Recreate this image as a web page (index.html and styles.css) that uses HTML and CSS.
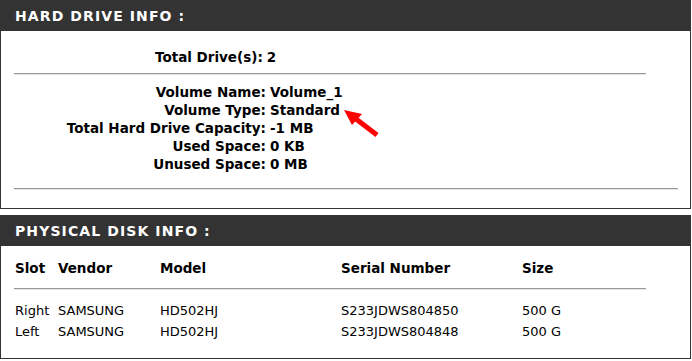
FILE: index.html
```html
<!DOCTYPE html>
<html lang="en">
<head>
    <meta charset="UTF-8">
    <title>Hard Drive Info</title>
    <link rel="stylesheet" href="styles.css">
</head>
<body>
    <!-- Hard drive info -->
    <div class="box box-hd">
        <div class="box-title">HARD DRIVE INFO :</div>
        <div class="box-body">
            <div class="info-row single">
                <span class="label">Total Drive(s):</span>
                <span class="value">2</span>
            </div>
            <div class="sep short"></div>
            <div class="info-list">
                <span class="label">Volume Name:</span><span class="value">Volume_1</span>
                <span class="label">Volume Type:</span><span class="value">Standard</span>
                <span class="label">Total Hard Drive Capacity:</span><span class="value">-1 MB</span>
                <span class="label">Used Space:</span><span class="value">0 KB</span>
                <span class="label">Unused Space:</span><span class="value">0 MB</span>
            </div>
            <div class="sep long"></div>
        </div>
        <svg class="arrow" width="40" height="30" viewBox="0 0 40 30">
            <path d="M35 26 L14 10" stroke="#ff0000" stroke-width="5" stroke-linecap="butt"/>
            <polygon points="2,1 20,5 10,16" fill="#ff0000"/>
        </svg>
    </div>

    <!-- Physical disk info -->
    <div class="box box-disk">
        <div class="box-title">PHYSICAL DISK INFO :</div>
        <div class="box-body">
            <div class="disk-row head">
                <span>Slot</span><span>Vendor</span><span>Model</span><span>Serial Number</span><span>Size</span>
            </div>
            <div class="sep short"></div>
            <div class="disk-row first">
                <span>Right</span><span>SAMSUNG</span><span>HD502HJ</span><span>S233JDWS804850</span><span>500 G</span>
            </div>
            <div class="disk-row">
                <span>Left</span><span>SAMSUNG</span><span>HD502HJ</span><span>S233JDWS804848</span><span>500 G</span>
            </div>
        </div>
    </div>
</body>
</html>
```

FILE: styles.css
```css
/* General */
body {
    margin: 0;
    padding: 0;
    background: #fff;
    font-family: "DejaVu Sans", sans-serif;
    font-size: 13px;
    color: #000;
}

/* Boxes */
.box {
    width: 689px;
    border: 1px solid #333;
    position: relative;
}

.box-hd {
    height: 207px;
}

.box-disk {
    margin-top: 6px;
    height: 142px;
}

.box-title {
    background: #333;
    color: #fff;
    font-weight: bold;
    font-size: 14px;
    letter-spacing: 1.1px;
    height: 30px;
    line-height: 31px;
    padding-left: 14px;
}

.box-body {
    padding: 0 13px;
}

/* Separator line */
.sep {
    height: 1px;
    background: #999;
    border-bottom: 1px solid #e4e4e4;
}

.sep.short {
    width: 632px;
}

.sep.long {
    width: 664px;
    margin-top: 15px;
}

/* Hard drive info */
.info-row.single {
    display: flex;
    font-weight: bold;
    font-size: 13.5px;
    padding: 18px 0 8px 141px;
}

.info-row .value {
    margin-left: 4px;
}

.info-list {
    display: grid;
    grid-template-columns: 252px auto;
    column-gap: 4px;
    line-height: 18px;
    font-weight: bold;
    font-size: 13.5px;
    margin-top: 8px;
}

.info-list .label {
    text-align: right;
}

.arrow {
    position: absolute;
    left: 341px;
    top: 108px;
}

/* Physical disk table */
.disk-row {
    display: grid;
    grid-template-columns: 43px 102px 181px 181px auto;
    padding-left: 1px;
    line-height: 21px;
}

.disk-row.head {
    font-weight: bold;
    font-size: 13.5px;
    line-height: 22px;
    padding-top: 11px;
    padding-bottom: 9px;
}

.disk-row.first {
    margin-top: 10px;
}
```
